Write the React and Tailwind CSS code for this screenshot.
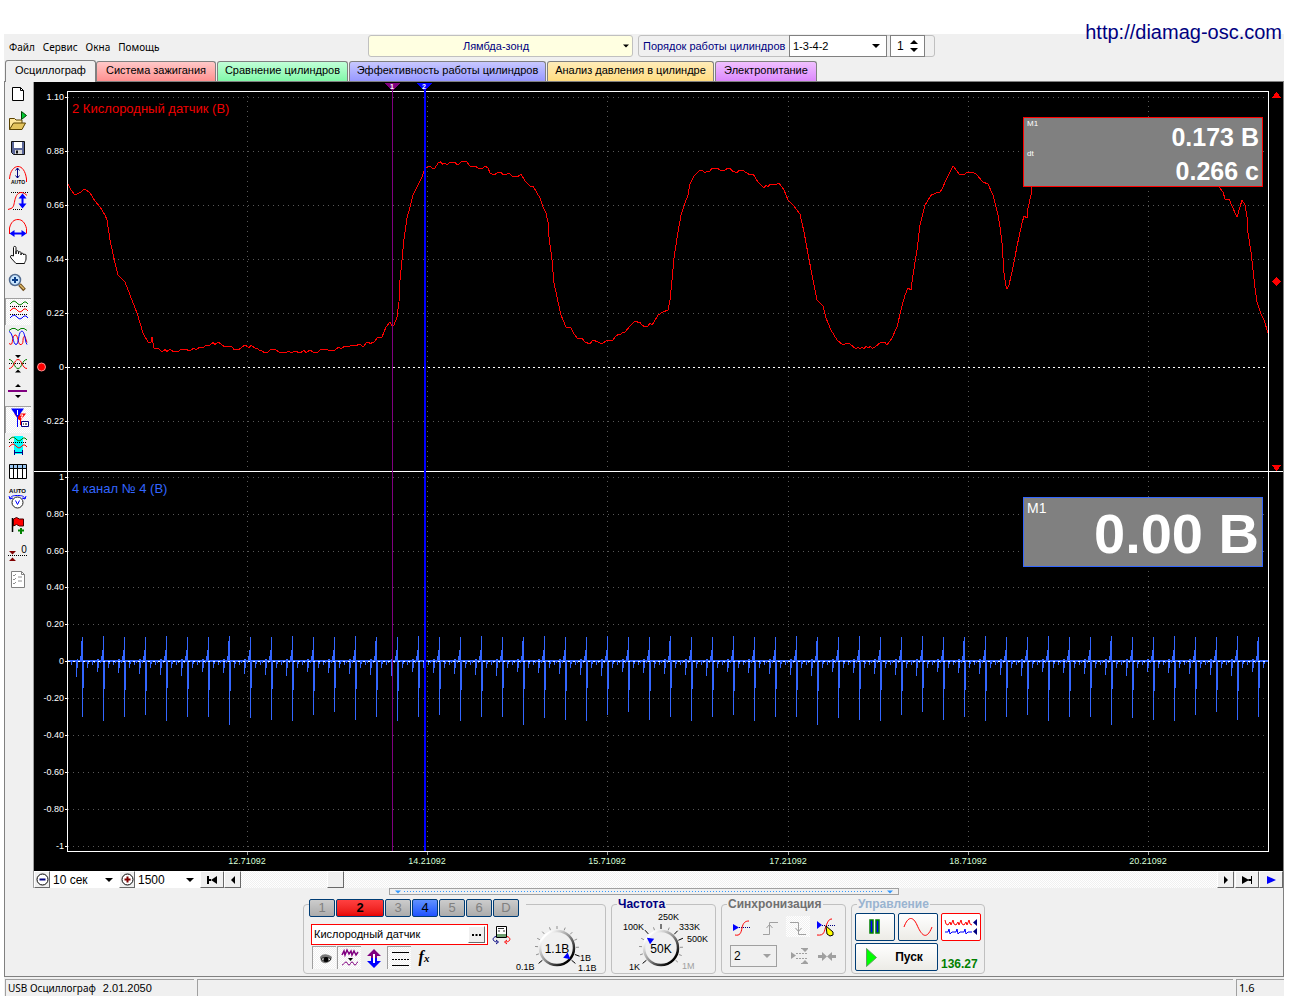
import React from "react";

const RED_POINTS = [
  [68, 184], [71, 190], [75, 195], [79, 193], [85, 189], [90, 193], [95, 201], [100, 207], [105, 215], [107, 220],
  [110, 240], [115, 263], [118, 275], [125, 282], [130, 295], [137, 313], [143, 333], [148, 342], [151, 342], [152, 337], [154, 348],
  [158, 348], [162, 352], [170, 349], [178, 352], [185, 349], [190, 351], [200, 347], [210, 345], [218, 342],
  [225, 347], [232, 347], [238, 350], [245, 345], [255, 348], [262, 351], [268, 352], [275, 349], [285, 353],
  [295, 351], [300, 353], [310, 350], [318, 352], [325, 349], [335, 350], [345, 346], [355, 346], [360, 344],
  [363, 347], [367, 342], [374, 342], [378, 337], [382, 337], [386, 327], [390, 322], [392, 326], [394, 325],
  [397, 317], [399, 302], [400, 280], [402, 260], [404, 239], [407, 218], [410, 207], [413, 195], [417, 187],
  [422, 177], [425, 168], [428, 167], [435, 168], [438, 163], [445, 163], [447, 165], [450, 162], [453, 163],
  [459, 164], [461, 162], [466, 161], [470, 166], [475, 166], [478, 168], [483, 168], [485, 166], [488, 168],
  [490, 173], [494, 175], [497, 173], [507, 174], [509, 173], [513, 177], [521, 174], [525, 181], [530, 186],
  [533, 186], [537, 193], [540, 198], [543, 207], [546, 213], [548, 222], [549, 237], [552, 260], [554, 283],
  [557, 297], [561, 315], [566, 327], [571, 328], [574, 334], [578, 339], [582, 338], [585, 342], [590, 344],
  [593, 340], [598, 342], [602, 344], [606, 341], [612, 341], [616, 336], [619, 334], [625, 332], [630, 326],
  [635, 321], [642, 325], [648, 326], [654, 322], [658, 315], [663, 312], [668, 310], [670, 300], [672, 280],
  [674, 258], [677, 238], [681, 215], [685, 203], [688, 195], [690, 184], [694, 176], [700, 170], [706, 172],
  [712, 168], [720, 170], [728, 168], [735, 172], [742, 170], [747, 173], [753, 174], [758, 182], [764, 188],
  [770, 184], [775, 185], [779, 183], [784, 190], [788, 200], [794, 206], [800, 214], [804, 232], [808, 254],
  [813, 280], [817, 300], [823, 306], [826, 318], [831, 330], [837, 340], [843, 345], [850, 344], [856, 349],
  [862, 347], [868, 348], [875, 347], [881, 342], [887, 345], [892, 338], [897, 327], [901, 310], [905, 295],
  [908, 288], [911, 290], [913, 275], [917, 250], [920, 225], [925, 205], [930, 197], [936, 193], [942, 189],
  [946, 180], [953, 166], [960, 175], [967, 172], [976, 174], [983, 182], [988, 184], [993, 195], [998, 215],
  [1000, 227], [1002, 243], [1004, 273], [1006, 286], [1007, 289], [1009, 285], [1012, 272], [1015, 257],
  [1017, 246], [1019, 237], [1022, 223], [1024, 216], [1027, 218], [1028, 208], [1031, 195], [1032, 187],
  [1040, 172], [1100, 162], [1180, 166], [1210, 176], [1219, 187], [1223, 192], [1225, 199], [1229, 199],
  [1232, 206], [1237, 217], [1240, 207], [1242, 200], [1245, 205], [1247, 217], [1248, 233], [1251, 252],
  [1253, 270], [1255, 288], [1257, 302], [1261, 314], [1264, 320], [1268, 333],
];

function ripple(points) {
  const out = [];
  points.forEach((p, i) => {
    out.push(p);
    const n = points[i + 1];
    if (n && n[0] - p[0] >= 6 && Math.abs(n[1] - p[1]) < 5) {
      const mx = (p[0] + n[0]) / 2;
      const my = (p[1] + n[1]) / 2;
      out.push([mx - 1, my + (i % 2 ? 1 : -1)]);
      out.push([mx + 1, my + (i % 3 ? 1 : -1)]);
    }
  });
  return out.map((p) => p.join(",")).join(" ");
}

const BOTTOMS = [717, 721, 717, 715, 721, 717, 717, 725, 718, 720, 721, 715, 712, 720];
const TICKS_TOP = [[97, "1.10"], [151, "0.88"], [205, "0.66"], [259, "0.44"], [313, "0.22"], [367, "0"], [421, "-0.22"]];
const TICKS_BOTTOM = [
  [477, "1"], [514, "0.80"], [551, "0.60"], [587, "0.40"], [624, "0.20"], [661, "0"],
  [698, "-0.20"], [735, "-0.40"], [772, "-0.60"], [809, "-0.80"], [846, "-1"],
];
const TIMES = [[247, "12.71092"], [427, "14.21092"], [607, "15.71092"], [788, "17.21092"], [968, "18.71092"], [1148, "20.21092"]];

function spikes() {
  let d = "";
  for (let i = 0; i < 57; i++) {
    const x = 82 + 21 * i;
    const bottom = BOTTOMS[i % 14];
    const top = i % 3 === 1 ? 636 : 637;
    d += `M${x} ${top}h1V${bottom}h-1z`;
    d += `M${x - 1} ${i % 7 ? 650 : 641}h1V661h-1z M${x - 2} 656h1V661h-1z`;
    d += `M${x + 1} 661h1V${688 + (i % 4)}h-1z`;
    d += `M${x + 5} 661h1V668h-1z M${x + 6} 661h1V664h-1z`;
    if (i < 56) {
      d += `M${x + 10} 661h1V665h-1z M${x + 12} 660h1V663h-1z`;
      d += `M${x + 15} 659h1V${672 + (i % 5)}h-1z M${x + 16} 659h1V668h-1z M${x + 18} 661h1V663h-1z`;
    }
  }
  return d + "M76 660h1V677h-1z M77 659h1V668h-1z M71 661h1V665h-1z";
}

function Chart() {
  return (
    <svg viewBox="34 82 1249 789" className="block h-auto w-full bg-black" fontFamily='"Liberation Sans", Arial, sans-serif' shapeRendering="crispEdges">
      <g stroke="#585858" strokeDasharray="1 4">
        {[...TICKS_TOP, ...TICKS_BOTTOM].map(([y]) => (
          <line key={y} x1="68" x2="1268" y1={y + 0.5} y2={y + 0.5} />
        ))}
        {TIMES.map(([x]) => (
          <line key={x} x1={x + 0.5} x2={x + 0.5} y1="96" y2="851" />
        ))}
      </g>
      <path d={spikes()} fill="#3366ff" />
      <rect x="68" y="660" width="1200" height="2" fill="#3366ff" />
      <line x1="68" x2="1268" y1="367.5" y2="367.5" stroke="#fff" strokeDasharray="2 3" />
      <line x1="68" x2="1268" y1="661.5" y2="661.5" stroke="#fff" strokeDasharray="2 3" />
      <polyline points={ripple(RED_POINTS)} fill="none" stroke="#f00" />
      <g stroke="#fff">
        <path d="M67.5 91.5H1268.5V851.5H67.5z" fill="none" />
        <path d="M34 471.5H1283" />
        {[...TICKS_TOP, ...TICKS_BOTTOM].map(([y]) => (
          <line key={y} x1="65" x2="68" y1={y + 0.5} y2={y + 0.5} />
        ))}
        {TIMES.map(([x]) => (
          <line key={x} x1={x + 0.5} x2={x + 0.5} y1="852" y2="855" stroke="#999" />
        ))}
      </g>
      <rect x="392" y="88" width="1" height="763" fill="#800080" />
      <path d="M385 83h15l-7 8h-1z" fill="#800080" />
      <rect x="424" y="88" width="2" height="763" fill="#00f" />
      <path d="M417 83h15l-7 8h-1z" fill="#00f" />
      <g fill="#fff" fontSize="7" fontWeight="bold" textAnchor="middle">
        <text x="392" y="89">1</text>
        <text x="424" y="89">2</text>
      </g>
      <g fill="#f00">
        <path d="M1276.5 92l5 6h-10z" />
        <path d="M1276.5 277l4.500 4.500-4.500 4.500-4.500-4.500z" />
        <path d="M1271.500 465h10l-5 6z" />
        <circle cx="41.500" cy="367" r="4" stroke="#ff9090" shapeRendering="auto" />
      </g>
      <g fill="#fff" fontSize="9" textAnchor="end">
        {[...TICKS_TOP, ...TICKS_BOTTOM].map(([y, t]) => (
          <text key={y} x="64" y={y + 3}>{t}</text>
        ))}
      </g>
      <g fill="#d8ffd8" fontSize="9" textAnchor="middle">
        {TIMES.map(([x, t]) => (
          <text key={x} x={x} y="864">{t}</text>
        ))}
      </g>
      <text x="72" y="113" fontSize="13" fill="#f00000">2 Кислородный датчик (В)</text>
      <text x="72" y="493" fontSize="13" fill="#3366ff">4 канал № 4 (В)</text>
    </svg>
  );
}

const wave = (y) => `M1 ${y + 1}l2-2 2-1 2 1 2 2 2 1 2-1 2-2 2 0 2 2`;

const TOOLS = [
  ["Новый", <><path d="M4.500 3.500h8l3 3v10h-11z" fill="#fff" stroke="#000" /><path d="M12.500 3.500v3h3" fill="none" stroke="#000" /></>],
  ["Открыть", <>
    <path d="M1.500 18.500v-11h5l1.500 1.500h6v3" fill="#ffe79c" stroke="#5a4300" />
    <path d="M1.500 18.500l4-6.500h12l-3.500 6.500z" fill="#e3c35d" stroke="#5a4300" />
    <path d="M13.500 .5v8l5-4z" fill="#00c832" stroke="#004000" />
  </>],
  ["Сохранить", <>
    <path d="M3.500 3.500h13v13h-11l-2-2z" fill="#5a6698" stroke="#111" />
    <path d="M6 4h8v6H6z" fill="#fff" /><path d="M7 12h7v4H7z" fill="#d8d8d8" /><path d="M8 12.500h2v3H8z" fill="#111" />
  </>],
  ["Авто по вертикали", <>
    <path d="M1.500 14C2 6 6 1.500 10 1.500S17.500 6 18.500 14v3" fill="none" stroke="#f00" />
    <path d="M9.500 3v10M7.500 5.500l2-2.500 2 2.500M7.500 10.500l2 2.500 2-2.500" fill="none" stroke="#000080" />
    <text x="10" y="18.500" fontSize="5" fontWeight="bold" textAnchor="middle" fill="#000" fontFamily='"Liberation Sans", sans-serif'>AUTO</text>
  </>],
  ["Масштаб по вертикали", <>
    <path d="M3 .5h17M5 17.500h9" stroke="#000" strokeDasharray="1 1" />
    <path d="M0 17.500l3-1c3-1 3-5 4-9s3-7 6-7 5 2 6 3" fill="none" stroke="#f00" />
    <path d="M14.500 1.500l4 5h-3v5h3l-4 5-4-5h3v-5h-3z" fill="#00f" />
  </>],
  ["Масштаб по горизонтали", <>
    <path d="M1.500 15V9C3 3 6 .5 10 .5s7 3 8.500 9v5" fill="none" stroke="#f00" />
    <path d="M1.500 14.500l5-3.500v2.500h7V11l5 3.500-5 3.500v-2.500h-7V18z" fill="#00f" />
  </>],
  ["Рука", <path d="M5.500 10V1.500c0-1.500 2.500-1.500 2.500 0V8V5.500c0-1 2.500-1 2.500 0V8v-1.500c0-1 2.500-1 2.500 0V9v-1c0-1 2.500-1 2.500 0V9c0-1 2.500-1 2.500 0v4c0 2-1.500 3-1.500 4.500H8L3 12c-1-1.500-.5-3 1-2.500z" fill="#fff" stroke="#111" />],
  ["Лупа", <>
    <path d="M11.500 11.500l5 5.500" stroke="#6e4b1c" strokeWidth="3.500" /><path d="M12 12l4 4" stroke="#e0bd6a" strokeWidth="1.500" />
    <circle cx="7" cy="7" r="5.500" fill="#c9e6ff" stroke="#536c90" strokeWidth="1.500" />
    <path d="M4 7h6M7 4v6" stroke="#0a3c86" strokeWidth="2" />
  </>],
  ["Раздельно", <>
    <path d={wave(3)} fill="none" stroke="#008000" /><path d={wave(10)} fill="none" stroke="#f00" /><path d={wave(17)} fill="none" stroke="#00f" />
    <path d="M1 6.500h18M1 14.500h18" stroke="#000" strokeDasharray="1 1" />
  </>, true],
  ["Совместно", <>
    <path d="M1 3.500l3-2h3l3 2 3-2h3l3 2" fill="none" stroke="#008000" />
    <path d="M1 16.500l2 1C5 17 4 9 7 8s3 9 5 9.500 3-1 3-4 1-5 2-4l2 6" fill="none" stroke="#f00" />
    <path d="M1 4.500c4 1 4 13 7 13s2-11 5-13 4 6 5 11l1 2" fill="none" stroke="#00f" />
  </>],
  ["Наложить", <>
    <path d="M7 1h6l-3 3zM7 18.500h6l-3-3z" fill="#000" /><path d="M1 9.500h18" stroke="#000" strokeDasharray="1 1" />
    <path d="M1 5.500c5 0 5 9 9 9s4-9 9-9" fill="none" stroke="#008000" /><path d="M1 14.500c5 0 5-9 9-9s4 9 9 9" fill="none" stroke="#f00" />
  </>],
  ["Разделитель", <><path d="M7 6h6l-3-3zM7 14h6l-3 3z" fill="#000" /><path d="M0 9h19v2H0z" fill="#800080" /></>],
  ["Маркеры", <>
    <path d="M5 5.500h12l-5 6.500h-2z" fill="#f00" /><path d="M11.500 10v7" stroke="#f00" />
    <path d="M2 .5h13L9 9H8z" fill="#00f" /><path d="M8.500 8v11" stroke="#00f" />
    <path d="M8.500 2v5M11 7h3l-2 3h2" stroke="#fff" fill="none" />
    <path d="M12.500 13.500h7v5h-7z" fill="#fff" stroke="#000080" /><path d="M14 16h1M16 16h2" stroke="#000" />
  </>, true],
  ["Интервал", <>
    <path d="M6 1h9v18H6z" fill="#0ff" /><path d="M1 7.500h18" stroke="#000" strokeDasharray="1 1" />
    <path d={wave(4)} fill="none" stroke="#008000" /><path d={wave(11)} fill="none" stroke="#f00" />
    <path d="M6.500 15v5M14.500 15v5M7 17.500h7" stroke="#000080" />
  </>],
  ["Таблица", <>
    <path d="M1.500 2.500h17v14h-17z" fill="#fff" stroke="#000" /><path d="M2 3h16v3H2z" fill="#9cc8f4" />
    <path d="M1 6.500h17M5.500 3v13M9.500 3v13M14.500 3v13" stroke="#000" />
  </>],
  ["Авто напряжение", <>
    <text x="9.500" y="4" fontSize="6" fontWeight="bold" textAnchor="middle" fill="#000" fontFamily='"Liberation Sans", sans-serif'>AUTO</text>
    <path d="M2 10c1-3 3-3.500 7.500-3.500S16 7 17 10M1 7l1 3 3-1M18 7l-1 3-3-1" fill="none" stroke="#00f" />
    <circle cx="9.500" cy="13.500" r="5.500" fill="#fff" stroke="#222" /><path d="M7.500 11.500l2 4 2-4" fill="none" stroke="#00f" />
  </>],
  ["Добавить метку", <>
    <path d="M4.500 2v14" stroke="#000" strokeWidth="1.500" /><path d="M5.500 3l3-1.500 3 1.500h4v7h-4l-3-1.500-3 1.500z" fill="#f00" stroke="#400" />
    <path d="M10 14.500h6M13 12v6" stroke="#008000" strokeWidth="2" />
  </>],
  ["Установить ноль", <>
    <path d="M1 8h7l-3.500 3.500zM1 18h7l-3.500-3.500z" fill="#800000" /><path d="M0 12.500h19" stroke="#000" strokeDasharray="1 1" />
    <text x="16" y="10" fontSize="10" textAnchor="middle" fill="#000" fontFamily='"Liberation Sans", sans-serif'>0</text>
  </>],
  ["Отчёт", <>
    <path d="M3.500 1.500h10l3 3v13h-13z" fill="#fff" stroke="#808080" /><path d="M13.500 1.500v3h3" fill="none" stroke="#808080" />
    <path d="M5 5l1 1 2-2M5 9l1 1 2-2M5 13l1 1 2-2M10 7h4M10 11h4" fill="none" stroke="#909090" />
  </>],
];

const DITHER = "bg-[repeating-conic-gradient(#ffffff_0_25%,#f0f0f0_0_50%)] bg-[length:2px_2px]";

function Tool({ label, children, pressed }) {
  return (
    <button
      aria-label={label}
      className={`flex h-[27px] w-full items-center justify-center pb-[4px] ${pressed ? `border-l border-t border-[#a0a0a0] ${DITHER}` : ""}`}
    >
      <svg width="20" height="20" viewBox="0 0 20 20" className="overflow-visible">{children}</svg>
    </button>
  );
}

function Arrow({ className = "" }) {
  return (
    <svg width="8" height="4" viewBox="0 0 8 4" className={`pointer-events-none ${className}`}>
      <path d="M0 0h8L4 4z" fill="currentColor" />
    </svg>
  );
}

function Pick({ label, value, className, arrow = "right-[6px] text-black" }) {
  return (
    <span className={`relative flex ${className}`}>
      <select aria-label={label} defaultValue={value} className="w-full appearance-none bg-transparent px-[3px] outline-none">
        <option>{value}</option>
      </select>
      <Arrow className={`absolute top-1/2 -translate-y-1/2 ${arrow}`} />
    </span>
  );
}

const RAISED = "flex shrink-0 items-center justify-center border border-b-[#696969] border-l-white border-r-[#696969] border-t-white bg-[#f0f0f0]";

const TABS = [
  ["Осциллограф", "h-[22px] w-[91px] bg-[#f0f0f0] pb-[3px]"],
  ["Система зажигания", "h-[20px] w-[120px] bg-linear-to-b from-[#ffc8c8] to-[#ff9090] pb-[2px]"],
  ["Сравнение цилиндров", "h-[20px] w-[131px] bg-linear-to-b from-[#c0ffd8] to-[#80f8a8] pb-[2px]"],
  ["Эффективность работы цилиндров", "h-[20px] w-[197px] bg-linear-to-b from-[#c8c8ff] to-[#9898ff] pb-[2px]"],
  ["Анализ давления в цилиндре", "h-[20px] w-[167px] bg-linear-to-b from-[#ffecb8] to-[#ffdc80] pb-[2px]"],
  ["Электропитание", "h-[20px] w-[102px] bg-linear-to-b from-[#f0c0ff] to-[#dc88fc] pb-[2px]"],
];

const GRAY_CH = "w-[26px] bg-linear-to-b from-[#cccccc] to-[#acacac] text-[#808080]";
const CHANNELS = [
  ["1", GRAY_CH],
  ["2", "w-[48px] bg-linear-to-b from-[#ff4040] to-[#e80000] font-bold text-black"],
  ["3", GRAY_CH],
  ["4", "w-[26px] bg-linear-to-b from-[#6090ff] to-[#2050ff] text-black"],
  ["5", GRAY_CH],
  ["6", GRAY_CH],
  ["D", GRAY_CH],
];

function polar(cx, cy, r, deg) {
  const a = (deg * Math.PI) / 180;
  return [cx + r * Math.cos(a), cy + r * Math.sin(a)];
}

function Dial({ id, cx, cy, value, ticks, dark, pointer }) {
  const [px, py] = polar(cx, cy, 14, pointer);
  return (
    <>
      <defs>
        <linearGradient id={id} x1="0" y1="0" x2="1" y2="1">
          <stop offset="0.15" stopColor="#ffffff" />
          <stop offset="0.5" stopColor="#909090" />
          <stop offset="0.85" stopColor="#000000" />
        </linearGradient>
      </defs>
      {ticks.map((a) => {
        const isDark = dark.includes(a);
        const [x1, y1] = polar(cx, cy, 19, a);
        const [x2, y2] = polar(cx, cy, isDark ? 24 : 22, a);
        return <line key={a} x1={x1} y1={y1} x2={x2} y2={y2} stroke={isDark ? "#000" : "#909090"} />;
      })}
      <circle cx={cx} cy={cy} r="17" fill="#f0f0f0" stroke={`url(#${id})`} strokeWidth="2.500" />
      <path d="M-3-3.500L3.500 0L-3 3.500z" fill="#00f" transform={`translate(${px} ${py}) rotate(${pointer})`} />
      <text x={cx} y={cy + 5} fontSize="12" textAnchor="middle" fill="#000">{value}</text>
    </>
  );
}

const TICK_ANGLES = [140, 162, 184, 206, 228, 250, 270, 292, 314, 336, 358, 20, 40];

function Group({ title, titleClass, className, children }) {
  return (
    <fieldset className={`min-w-0 rounded-[4px] border border-[#c0c0c0] ${className}`}>
      <legend className={`ml-[5px] px-px text-[12px] font-bold leading-[12px] ${titleClass}`}>{title}</legend>
      {children}
    </fieldset>
  );
}

function SyncButton({ label, children, className = "" }) {
  return (
    <button aria-label={label} className={`flex h-[21px] w-[24px] items-center justify-center ${className}`}>
      <svg width="20" height="20" viewBox="0 0 20 20" className="overflow-visible" fill="none">{children}</svg>
    </button>
  );
}

const ACTION = "flex items-center justify-center rounded-[2px] border border-[#003c74] bg-linear-to-b from-white to-[#ecebe6]";

function BottomPanel() {
  return (
    <div className="flex justify-center gap-[5px] pb-[2px] pt-[3px]">
      <section aria-label="Канал" className="mt-[6px] w-[303px] rounded-[4px] border border-[#c0c0c0] pl-[5px]">
        <div className="-mt-[7px] flex w-[217px] gap-px bg-[#f0f0f0] pt-px text-[13px] leading-[16px]">
          {CHANNELS.map(([n, cls]) => (
            <button key={n} className={`h-[18px] rounded-[2px] border border-[#003c74] ${cls}`}>{n}</button>
          ))}
        </div>
        <div className="flex">
          <div className="w-[205px] pl-[2px] pt-[7px]">
            <div className="flex items-center gap-[4px]">
              <div className="flex h-[21px] w-[177px] items-center border border-[#f00] bg-white pr-px">
                <input aria-label="Название канала" defaultValue="Кислородный датчик" className="w-[156px] bg-transparent pl-[2px] text-[11px] outline-none" />
                <button aria-label="Выбрать" className={`h-[17px] w-[17px] ${RAISED}`}>
                  <svg width="9" height="2"><path d="M0 0h2v2H0zM3.500 0h2v2h-2zM7 0h2v2H7z" /></svg>
                </button>
              </div>
              <button aria-label="Поменять каналы">
                <svg width="20" height="20" viewBox="0 0 20 20" fill="none">
                  <path d="M4.500 1.500h10v11h-10z" fill="#fff" stroke="#000" />
                  <path d="M5 9h9v3H5z" fill="#70a070" />
                  <path d="M6 4l1-1 1 1 1-1 1 1 1-1 1 1M6 6h2M11 6h2" stroke="#333" />
                  <path d="M4 11.500c-4 1-4 5 1 5.500M4 15l2.500 2-2.500 2" stroke="#000080" />
                  <path d="M15 11.500c4 1 4 5-1 5.500M15 15l-2.500 2 2.500 2" stroke="#f00" />
                </svg>
              </button>
            </div>
            <div className="mt-px flex gap-px pl-px">
              <button aria-label="Показать" className={`h-[23px] w-[24px] border-l border-t border-[#a0a0a0] ${DITHER}`}>
                <svg width="22" height="22" viewBox="0 0 22 22">
                  <path d="M7 10c3-4 8-3 12 0l-1 3c-3 4-8 4-10 1z" fill="#777" />
                  <path d="M8 12c2-2 7-2 10 0-2 3-7 3-10 0z" fill="#fff" stroke="#222" /><circle cx="13" cy="12.500" r="2.500" fill="#000" />
                </svg>
              </button>
              <button aria-label="Фильтр" className={`h-[23px] w-[24px] border-l border-t border-[#a0a0a0] ${DITHER}`}>
                <svg width="22" height="22" viewBox="0 0 22 22" fill="none">
                  <path d="M4 8l2-4 1 4 2-5 2 4 2-3 1 4 2-4 2 4 2-3" stroke="#800080" strokeWidth="1.500" />
                  <path d="M10 11h5l-2.500 3z" fill="#000" /><path d="M4 18c2 0 2-3 4-3s1 3 3 3 1-3 3-3 1 3 3 3 1-3 3-3" stroke="#800080" />
                </svg>
              </button>
              <button aria-label="Инверсия" className="h-[23px] w-[24px]">
                <svg width="24" height="22" viewBox="0 0 24 22">
                  <path d="M12 2l7 7h-4v2H9V9H5z" fill="#800080" /><path d="M12 21l7-7h-4v-3H9v3H5z" fill="#00f" /><path d="M11 7h2v9h-2z" fill="#fff" />
                </svg>
              </button>
              <button aria-label="Линии" className={`h-[23px] w-[24px] border-l border-t border-[#a0a0a0] ${DITHER}`}>
                <svg width="22" height="22" viewBox="0 0 22 22"><path d="M4 5.500h17M4 18.500h17" stroke="#000" /><path d="M4 12.500h17" stroke="#000" strokeDasharray="2 1" /></svg>
              </button>
              <button className="h-[23px] w-[24px] font-['Liberation_Serif',serif] text-[16px] font-bold italic leading-[20px]">f<span className="text-[11px]">x</span></button>
            </div>
          </div>
          <svg width="88" height="54" viewBox="514 917 88 54" className="overflow-visible" fontFamily='"Liberation Sans", sans-serif' fontSize="9">
            <Dial id="gainRing" cx={557} cy={948} value="1.1В" ticks={TICK_ANGLES} dark={[140, 20, 40]} pointer={40} />
            <text x="516" y="970">0.1В</text>
            <text x="580" y="961">1В</text>
            <text x="578" y="971">1.1В</text>
          </svg>
        </div>
      </section>

      <Group title="Частота" titleClass="text-[#000080]" className="w-[105px]">
        <svg width="103" height="63" viewBox="612 910 103 63" className="overflow-visible" fontFamily='"Liberation Sans", sans-serif' fontSize="9">
          <Dial id="freqRing" cx={661} cy={948} value="50K" ticks={TICK_ANGLES} dark={[140, 228, 270, 314, 336]} pointer={216} />
          <text x="658" y="920">250K</text>
          <text x="623" y="930">100K</text>
          <text x="679" y="930">333K</text>
          <text x="687" y="942">500K</text>
          <text x="629" y="970">1K</text>
          <text x="682" y="969" fill="#a0a0a0">1M</text>
        </svg>
      </Group>

      <Group title="Синхронизация" titleClass="text-[#707070]" className="w-[125px]">
        <div className="flex flex-col gap-[8px] pl-[8px] pt-[6px]">
          <div className="flex gap-[4px]">
            <SyncButton label="По фронту">
              <path d="M1 7v7l6-3.500z" fill="#00f" /><path d="M7 10.500h11" stroke="#000080" strokeDasharray="1 1" />
              <path d="M3 18c5 1 6-2 7-7s3-7 7-7" stroke="#f00" />
            </SyncButton>
            <SyncButton label="Фронт вверх"><path d="M3 17.500h6.500v-12H18M6.500 11l3-3.500 3 3.500" stroke="#a0a0a0" /></SyncButton>
            <SyncButton label="Фронт вниз" className={DITHER}><path d="M2 5.500h8.500v12H18M7.500 11l3 3.500 3-3.500" stroke="#a0a0a0" /></SyncButton>
            <SyncButton label="Уровень вручную">
              <path d="M1 4v8l5-4z" fill="#00f" /><path d="M6 8.500h13" stroke="#000080" strokeDasharray="1 1" />
              <path d="M1 18c8 1 7-4 9-9s3-7 6-7" stroke="#f00" />
              <path d="M10 9l7 6v3l-3 1-3-2z" fill="#ff0" stroke="#000" />
            </SyncButton>
          </div>
          <div className="flex gap-[11px]">
            <Pick label="Канал синхронизации" value="2" className="h-[22px] w-[47px] border border-[#a0a0a0] text-[12px]" arrow="right-[5px] text-[#a0a0a0]" />
            <SyncButton label="Гистерезис">
              <path d="M1 6v7l5-3.500z" fill="#a0a0a0" /><path d="M6 7.500h12M6 12.500h12" stroke="#a0a0a0" strokeDasharray="2 1" />
              <path d="M11 2.500h7M11 17.500h7" stroke="#a0a0a0" /><path d="M12 3h6l-3 3zM12 17h6l-3-3z" fill="#a0a0a0" />
            </SyncButton>
            <SyncButton label="Сжать" className="-ml-[8px]">
              <path d="M1 9h4V6l5 4.500L5 15v-3H1zM19 9h-4V6l-5 4.500 5 4.500v-3h4z" fill="#a0a0a0" />
            </SyncButton>
          </div>
        </div>
      </Group>

      <Group title="Управление" titleClass="text-[#9ab4d0]" className="w-[134px]">
        <div className="grid grid-cols-[40px_40px_40px] gap-x-[3px] gap-y-[2px] pl-[3px] pt-[3px]">
          <button aria-label="Пауза" className={`h-[28px] ${ACTION}`}>
            <svg width="12" height="16"><path d="M1 1h3v13H1zM7 1h3v13H7z" fill="#00f" stroke="#008000" strokeWidth="1.500" /></svg>
          </button>
          <button aria-label="Синус" className={`h-[28px] ${ACTION}`}>
            <svg width="30" height="20" viewBox="0 0 30 20"><path d="M1 10C5-1 10-1 14 8s9 17 15 2" fill="none" stroke="#f00" /></svg>
          </button>
          <button aria-label="Сигналы" className="flex h-[28px] items-center justify-center rounded-[2px] border border-[#f00] bg-white">
            <svg width="34" height="20" viewBox="0 0 34 20" fill="none">
              <path d="M1 3l1 4 2 1 2-3 1 3 2-5 1 4 2 1 2-3 1 3 2-5 1 4 2 1 2-3 1 3 2-5 1 4 2 1" stroke="#f00" />
              <path d="M1 15h3l1-3 1 5 2-2h4l1-3 1 5 2-2h4l1-3 1 5 2-2h4" stroke="#00f" />
              <path d="M33 2v7l-4-3.500zM33 11v7l-4-3.500z" fill="#000080" />
            </svg>
          </button>
          <button className={`col-span-2 h-[28px] gap-[18px] pr-[4px] text-[12px] font-bold ${ACTION}`}>
            <svg width="11" height="19" viewBox="0 0 11 19"><path d="M.5.5v18l10-9z" fill="#0f0" stroke="#60a060" /></svg>
            Пуск
          </button>
          <output className="self-end text-[12px] font-bold leading-[14px] text-[#008000]">136.27</output>
        </div>
      </Group>
    </div>
  );
}

export default function App() {
  return (
    <div className="min-h-screen bg-white pl-[4px] pr-[12px] font-['Liberation_Sans',Arial,sans-serif] text-[11px] text-black">
      <div className="relative z-10 flex h-[34px] justify-end pr-[2px] pt-[20px]">
        <a href="http://diamag-osc.com" className="text-[20px] leading-[24px] text-[#000080]">http://diamag-osc.com</a>
      </div>

      <div className="bg-[#f0f0f0]">
        <header className="flex h-[25px] items-start pt-px">
          <nav className="flex h-[24px] w-[364px] items-center gap-[8px] pl-[5px] font-['Noto_Sans',sans-serif] text-[10px]">
            {["Файл", "Сервис", "Окна", "Помощь"].map((m) => (
              <button key={m}>{m}</button>
            ))}
          </nav>
          <Pick
            label="Режим"
            value="Лямбда-зонд"
            className="mr-[5px] h-[22px] w-[265px] rounded-[3px] border border-[#c0c0c0] bg-[#ffffe1] text-[#000080] [&>select]:pr-[12px] [&>select]:[text-align-last:center]"
            arrow="right-[3px] w-[6px] text-black"
          />
          <div className="flex h-[22px] w-[297px] items-center rounded-[3px] border border-[#c0c0c0] pl-[4px] text-[#000080]">
            <span className="w-[146px] whitespace-nowrap">Порядок работы цилиндров</span>
            <Pick label="Порядок работы цилиндров" value="1-3-4-2" className="h-[22px] w-[98px] border border-[#808080] bg-white text-black" />
            <div className="ml-[3px] flex h-[22px] w-[35px] items-center border border-[#808080] bg-white text-black">
              <input aria-label="Номер цилиндра" defaultValue="1" className="w-[19px] bg-transparent pl-[6px] text-[12px] outline-none" />
              <div className="flex flex-col gap-[4px]">
                <button aria-label="Больше"><Arrow className="rotate-180" /></button>
                <button aria-label="Меньше"><Arrow /></button>
              </div>
            </div>
          </div>
        </header>

        <div role="tablist" className="flex h-[23px] items-end border-b border-[#808080] pl-px">
          {TABS.map(([t, cls], i) => (
            <button
              key={t}
              role="tab"
              aria-selected={i === 0}
              className={`whitespace-nowrap rounded-t-[3px] border-t border-r border-l border-[#808080] ${i ? "mr-px" : "-mb-px"} ${cls}`}
            >
              {t}
            </button>
          ))}
        </div>

        <div className="flex border-b border-l border-r border-[#808080]">
          <aside className="w-[29px] shrink-0 border-r border-[#a0a0a0] pr-[2px]">
            {TOOLS.map(([label, icon, pressed]) => (
              <Tool key={label} label={label} pressed={pressed}>{icon}</Tool>
            ))}
          </aside>
          <main className="min-w-0 flex-1">
            <div className="relative">
              <Chart />
              <dl className="absolute right-[20px] top-[35px] grid h-[70px] w-[240px] grid-cols-[auto_1fr] grid-rows-[31px_31px] content-start border border-[#f00] bg-[#808080] px-[3px] text-white">
                <dt className="pt-px text-[8px] leading-[10px]">M1</dt>
                <dd className="text-right text-[25px] font-bold leading-[38px]">0.173 В</dd>
                <dt className="text-[8px] leading-[10px]">dt</dt>
                <dd className="text-right text-[25px] font-bold leading-[44px]">0.266 с</dd>
              </dl>
              <dl className="absolute right-[20px] top-[415px] flex h-[70px] w-[240px] justify-between border border-[#3366ff] bg-[#808080] px-[3px] text-white">
                <dt className="pt-[2px] text-[14px] leading-[16px]">M1</dt>
                <dd className="text-[56px] font-bold leading-[72px]">0.00 В</dd>
              </dl>
            </div>
            <div className="flex h-[17px]">
              <button aria-label="Уменьшить время" className={`w-[16px] ${RAISED}`}>
                <svg width="13" height="13"><circle cx="6.500" cy="6.500" r="5.500" fill="#fff" stroke="#000" /><path d="M3.500 6.500h6" stroke="#000080" strokeWidth="2" /></svg>
              </button>
              <Pick label="Время" value="10 сек" className="w-[69px] bg-white text-[12px]" arrow="right-[6px] text-black" />
              <button aria-label="Увеличить время" className={`w-[16px] ${RAISED}`}>
                <svg width="13" height="13"><circle cx="6.500" cy="6.500" r="5.500" fill="#fff" stroke="#000" /><path d="M3.500 6.500h6M6.500 3.500v6" stroke="#800000" strokeWidth="2" /></svg>
              </button>
              <Pick label="Масштаб" value="1500" className="w-[65px] bg-white text-[12px]" arrow="right-[6px] text-black" />
              <button aria-label="В начало" className={`w-[24px] ${RAISED}`}>
                <svg width="11" height="8"><path d="M0 0h2v8H0zM2 3h2v2H2zM10 0v8L4 4z" /></svg>
              </button>
              <button aria-label="Назад" className={`w-[17px] ${RAISED}`}><svg width="4" height="8"><path d="M4 0v8L0 4z" /></svg></button>
              <div className={`flex-1 pl-[86px] ${DITHER}`}><div className={`h-[17px] w-[17px] ${RAISED}`} /></div>
              <button aria-label="Вперёд" className={`mr-px w-[17px] ${RAISED}`}><svg width="4" height="8"><path d="M0 0v8l4-4z" /></svg></button>
              <button aria-label="В конец" className={`w-[24px] ${RAISED}`}>
                <svg width="11" height="8"><path d="M9 0h1v8H9zM6 3h3v2H6zM0 0v8l7-4z" /></svg>
              </button>
              <button aria-label="Воспроизвести" className={`w-[24px] ${RAISED}`}><svg width="9" height="8"><path d="M0 0v8l9-4z" fill="#00f" /></svg></button>
            </div>
          </main>
        </div>
        <div className="-mt-px border-x border-b border-[#808080] bg-[#f0f0f0]">
          <div className="mx-auto flex h-[7px] w-[510px] items-center gap-[3px] border border-[#a0a0a0] px-[5px] text-[#3399ff]">
            <Arrow className="w-[6px]" />
            <div className="h-px flex-1 bg-[repeating-linear-gradient(90deg,#3399ff_0_1px,transparent_1px_3px)]" />
            <Arrow className="w-[6px]" />
          </div>
          <BottomPanel />
        </div>
        <footer className="flex h-[19px] gap-[3px] pl-px pt-[2px] text-[11px] leading-[16px]">
          <div className="flex w-[189px] gap-[7px] border-l border-t border-[#a0a0a0] pl-[2px]">
            <span className="font-['Noto_Sans',sans-serif] text-[10px]">USB Осциллограф</span>
            <span>2.01.2050</span>
          </div>
          <div className="flex-1 border-l border-t border-[#a0a0a0]" />
          <div className="w-[48px] border-l border-t border-[#a0a0a0] pl-[2px] font-['Noto_Sans',sans-serif]">1.6</div>
        </footer>
      </div>
    </div>
  );
}
